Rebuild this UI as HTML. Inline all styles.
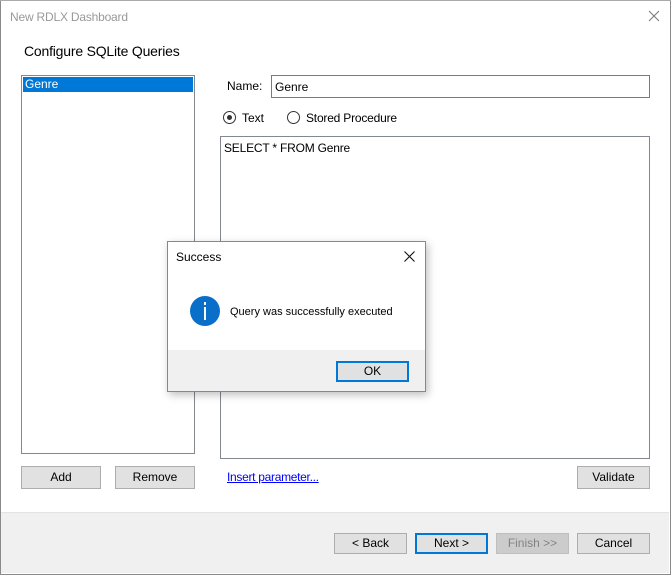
<!DOCTYPE html>
<html><head><meta charset="utf-8"><style>
*{margin:0;padding:0;box-sizing:border-box}
body{width:671px;height:575px;background:#fff;font-family:"Liberation Sans",sans-serif;font-size:12px;color:#000;position:relative;overflow:hidden}
.a{position:absolute}
.btn{position:absolute;background:#e1e1e1;border:1px solid #adadad;text-align:center;line-height:20px;font-size:12px}
.rad{position:absolute;width:13px;height:13px;border:1px solid #333;border-radius:50%;background:#fff}
</style></head><body>
<div class="a" style="left:0;top:0;width:671px;height:575px;border:1px solid #8a8a8a;border-top:none"></div>
<div class="a" style="left:0;top:0;width:671px;height:1px;background:#aaa"></div>
<div class="a" style="left:10px;top:10px;color:#999;font-size:12px;letter-spacing:-0.2px">New RDLX Dashboard</div>
<svg class="a" style="left:648px;top:10px" width="12" height="12"><path d="M1 1L11 11M11 1L1 11" stroke="#777" stroke-width="1"/></svg>
<div class="a" style="left:24px;top:43px;font-size:14px;letter-spacing:-0.2px">Configure SQLite Queries</div>
<div class="a" style="left:21px;top:75px;width:174px;height:379px;border:1px solid #828790"></div>
<div class="a" style="left:23px;top:77px;width:170px;height:15px;background:#0078d7;color:#fff;padding-left:2px;line-height:15px">Genre</div>
<div class="a" style="left:227px;top:79px">Name:</div>
<div class="a" style="left:271px;top:75px;width:379px;height:23px;border:1px solid #7a7a7a;padding:4px 0 0 3px">Genre</div>
<div class="rad" style="left:223px;top:111px"><div class="a" style="left:3px;top:3px;width:5px;height:5px;border-radius:50%;background:#333"></div></div>
<div class="a" style="left:242px;top:111px">Text</div>
<div class="rad" style="left:287px;top:111px"></div>
<div class="a" style="left:306px;top:111px;letter-spacing:-0.2px">Stored Procedure</div>
<div class="a" style="left:220px;top:136px;width:430px;height:323px;border:1px solid #828790;padding:4px 0 0 3px;letter-spacing:-0.2px">SELECT * FROM Genre</div>
<div class="btn" style="left:21px;top:466px;width:80px;height:23px">Add</div>
<div class="btn" style="left:115px;top:466px;width:80px;height:23px">Remove</div>
<div class="a" style="left:227px;top:470px;color:#00f;text-decoration:underline;letter-spacing:-0.3px">Insert parameter...</div>
<div class="btn" style="left:577px;top:466px;width:73px;height:23px">Validate</div>
<div class="a" style="left:1px;top:512px;width:668px;height:61px;background:#f0f0f0;border-top:1px solid #e3e3e3"></div>
<div class="btn" style="left:334px;top:533px;width:73px;height:21px;line-height:19px">&lt; Back</div>
<div class="btn" style="left:415px;top:533px;width:73px;height:21px;line-height:17px;border:2px solid #0078d7">Next &gt;</div>
<div class="btn" style="left:496px;top:533px;width:73px;height:21px;line-height:19px;background:#ccc;border-color:#bfbfbf;color:#838383">Finish &gt;&gt;</div>
<div class="btn" style="left:577px;top:533px;width:73px;height:21px;line-height:19px">Cancel</div>
<div class="a" style="left:167px;top:241px;width:259px;height:151px;border:1px solid #888;background:#fff;box-shadow:2px 3px 8px rgba(0,0,0,.25)"></div>
<div class="a" style="left:176px;top:250px">Success</div>
<svg class="a" style="left:404px;top:251px" width="11" height="11"><path d="M0.5 0.5L10.5 10.5M10.5 0.5L0.5 10.5" stroke="#111" stroke-width="1.1"/></svg>
<div class="a" style="left:190px;top:296px;width:30px;height:30px;border-radius:50%;background:#0a6fc9"><div class="a" style="left:14px;top:6px;width:2px;height:3px;background:#fff"></div><div class="a" style="left:14px;top:11px;width:2px;height:13px;background:#fff"></div></div>
<div class="a" style="left:230px;top:306px;font-size:11px">Query was successfully executed</div>
<div class="a" style="left:168px;top:350px;width:257px;height:41px;background:#f0f0f0"></div>
<div class="btn" style="left:336px;top:361px;width:73px;height:21px;line-height:17px;border:2px solid #0078d7">OK</div>
</body></html>
